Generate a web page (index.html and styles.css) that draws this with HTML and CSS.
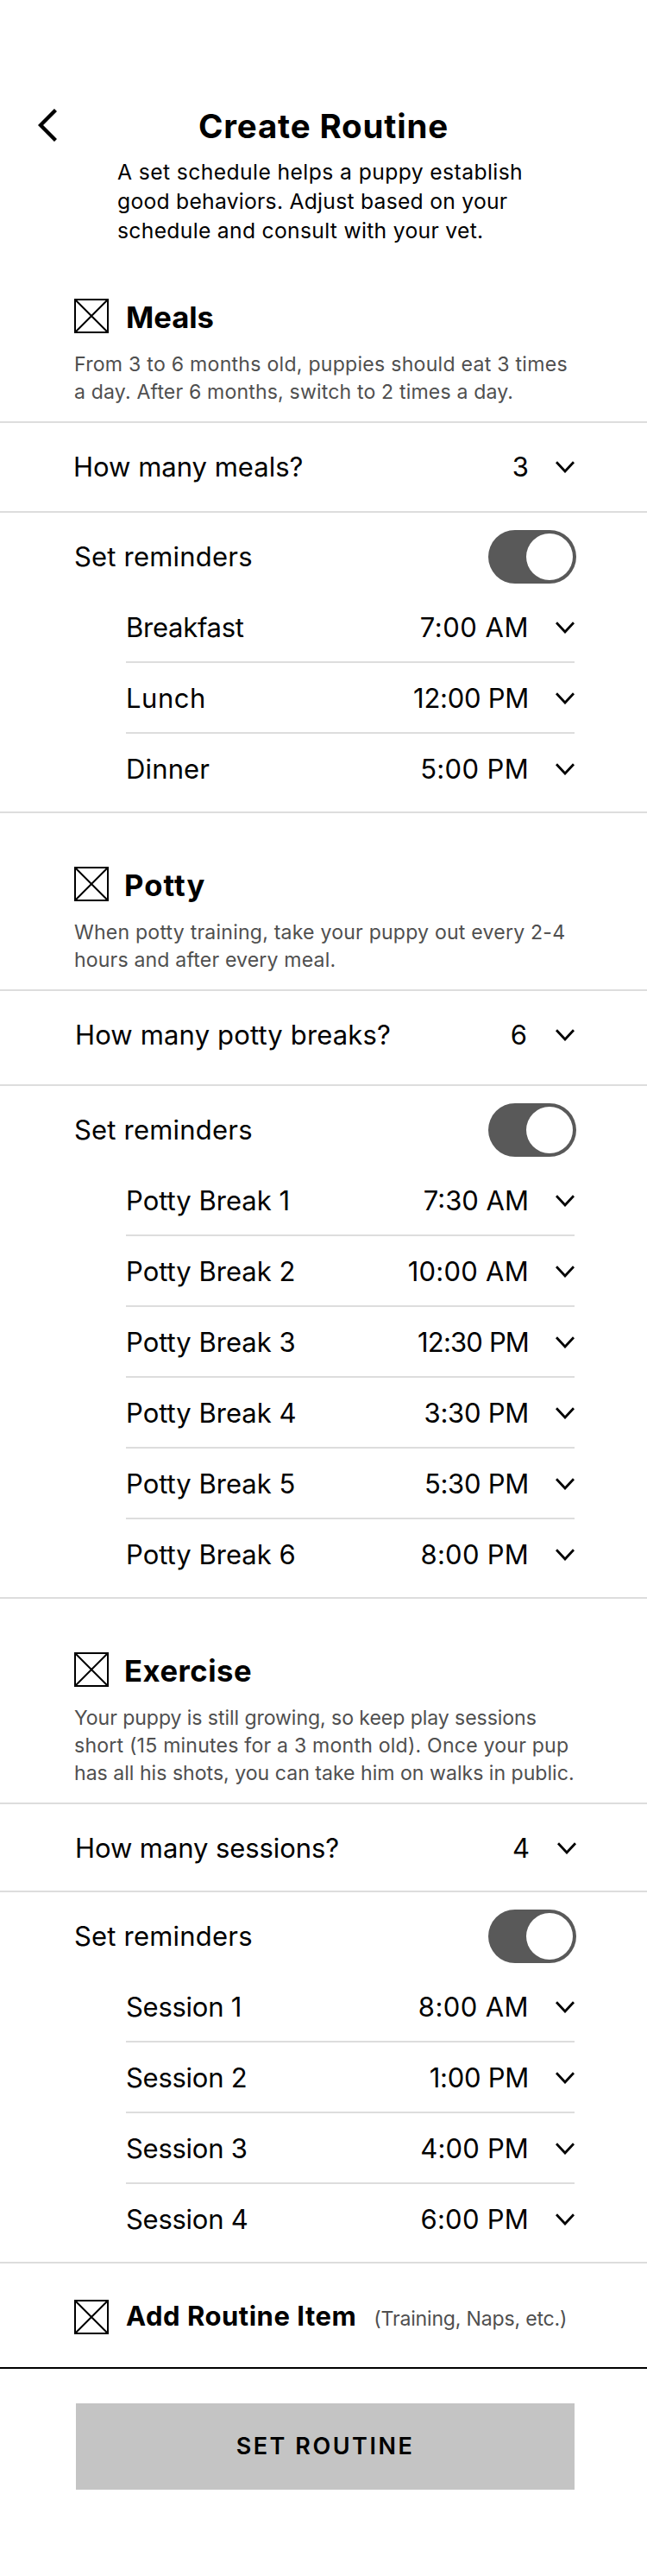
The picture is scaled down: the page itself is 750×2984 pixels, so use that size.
FILE: index.html
```html
<!DOCTYPE html>
<html lang="en">
<head>
<meta charset="utf-8">
<title>Create Routine</title>
<link rel="stylesheet" href="styles.css">
</head>
<body>
<svg class="defs" aria-hidden="true">
  <symbol id="box" viewBox="0 0 40 40"><path d="M1 1H39V39H1ZM1 1L39 39M39 1L1 39" fill="none" stroke="#000" stroke-width="2"/></symbol>
  <symbol id="down" viewBox="0 0 22 14"><path d="M1 1.2L11 12L21 1.2" fill="none" stroke="#000" stroke-width="2.8"/></symbol>
</svg>
<main class="page">
  <header class="header">
    <svg class="back" viewBox="0 0 22 38"><path d="M20.5 1.5L3 19L20.5 36.5" fill="none" stroke="#000" stroke-width="4.4"/></svg>
    <h1 class="title">Create Routine</h1>
    <p class="intro"><span class="line t40">A set schedule helps a puppy establish</span><span class="line t25">good behaviors. Adjust based on your</span><span class="line t30">schedule and consult with your vet.</span></p>
  </header>

  <section class="section">
    <div class="heading-row"><svg class="box"><use href="#box"/></svg><h2 class="heading">Meals</h2></div>
    <p class="desc"><span class="line t25">From 3 to 6 months old, puppies should eat 3 times</span><span class="line t15">a day. After 6 months, switch to 2 times a day.</span></p>
    <div class="count"><span class="label">How many meals?</span><span class="value">3</span><svg class="down"><use href="#down"/></svg></div>
    <div class="reminders"><span class="label t20">Set reminders</span><span class="toggle"><span class="knob"></span></span></div>
    <ul class="times">
      <li class="time"><span class="label tn25">Breakfast</span><span class="value t50">7:00 AM</span><svg class="down"><use href="#down"/></svg></li>
      <li class="time"><span class="label t50">Lunch</span><span class="value tn25">12:00 PM</span><svg class="down"><use href="#down"/></svg></li>
      <li class="time"><span class="label t15">Dinner</span><span class="value t35">5:00 PM</span><svg class="down"><use href="#down"/></svg></li>
    </ul>
  </section>

  <section class="section section-potty">
    <div class="heading-row"><svg class="box"><use href="#box"/></svg><h2 class="heading t100">Potty</h2></div>
    <p class="desc"><span class="line t20">When potty training, take your puppy out every 2-4</span><span class="line t15">hours and after every meal.</span></p>
    <div class="count"><span class="label t15">How many potty breaks?</span><span class="value">6</span><svg class="down"><use href="#down"/></svg></div>
    <div class="reminders"><span class="label t20">Set reminders</span><span class="toggle"><span class="knob"></span></span></div>
    <ul class="times">
      <li class="time"><span class="label">Potty Break 1</span><span class="value">7:30 AM</span><svg class="down"><use href="#down"/></svg></li>
      <li class="time"><span class="label">Potty Break 2</span><span class="value t25">10:00 AM</span><svg class="down"><use href="#down"/></svg></li>
      <li class="time"><span class="label">Potty Break 3</span><span class="value tn80">12:30 PM</span><svg class="down"><use href="#down"/></svg></li>
      <li class="time"><span class="label">Potty Break 4</span><span class="value tn25">3:30 PM</span><svg class="down"><use href="#down"/></svg></li>
      <li class="time"><span class="label">Potty Break 5</span><span class="value tn25">5:30 PM</span><svg class="down"><use href="#down"/></svg></li>
      <li class="time"><span class="label">Potty Break 6</span><span class="value t25">8:00 PM</span><svg class="down"><use href="#down"/></svg></li>
    </ul>
  </section>

  <section class="section section-exercise">
    <div class="heading-row"><svg class="box"><use href="#box"/></svg><h2 class="heading t50">Exercise</h2></div>
    <p class="desc"><span class="line tn10">Your puppy is still growing, so keep play sessions</span><span class="line t20">short (15 minutes for a 3 month old). Once your pup</span><span class="line">has all his shots, you can take him on walks in public.</span></p>
    <div class="count"><span class="label tn10">How many sessions?</span><span class="value">4</span><svg class="down"><use href="#down"/></svg></div>
    <div class="reminders"><span class="label t20">Set reminders</span><span class="toggle"><span class="knob"></span></span></div>
    <ul class="times">
      <li class="time"><span class="label tn25">Session 1</span><span class="value t40">8:00 AM</span><svg class="down"><use href="#down"/></svg></li>
      <li class="time"><span class="label tn25">Session 2</span><span class="value tn25">1:00 PM</span><svg class="down"><use href="#down"/></svg></li>
      <li class="time"><span class="label tn25">Session 3</span><span class="value t15">4:00 PM</span><svg class="down"><use href="#down"/></svg></li>
      <li class="time"><span class="label tn25">Session 4</span><span class="value t25">6:00 PM</span><svg class="down"><use href="#down"/></svg></li>
    </ul>
  </section>

  <div class="add"><svg class="box"><use href="#box"/></svg><p class="add-text"><strong class="add-title">Add Routine Item</strong><span class="add-note">(Training, Naps, etc.)</span></p></div>
  <footer class="footer"><button class="submit">SET ROUTINE</button></footer>
</main>
</body>
</html>
```
FILE: styles.css
```css
* { box-sizing: border-box; margin: 0; padding: 0; }
body { background: #fff; color: #000; font-family: Inter, "Open Sans", sans-serif; font-size: 31px; line-height: 40px; }
.defs { display: none; }
.page { width: 750px; height: 2984px; overflow: hidden; }
.line { display: block; white-space: nowrap; }

.header { display: grid; grid-template-columns: 136px 1fr 136px; row-gap: 12px; padding-top: 122px; }
.back { width: 22px; height: 38px; margin: 4px 0 0 44px; }
.title { font-size: 38.5px; line-height: 48px; letter-spacing: 0.84px; text-align: center; white-space: nowrap; }
.intro { grid-column: 2; font-size: 24.7px; line-height: 34px; }

.section { padding-top: 62px; }
.heading-row { display: flex; align-items: center; gap: 20px; height: 40px; padding-left: 86px; }
.box { flex: none; width: 40px; height: 40px; }
.heading { padding-top: 1px; font-size: 34.6px; line-height: 40px; }
.section-potty .heading-row, .section-exercise .heading-row { gap: 18px; }
.desc { margin-top: 20px; padding: 0 0 18px 86px; color: #4f4f4f; font-size: 23.1px; line-height: 32px; border-bottom: 2px solid #ddd; }

.label { flex: 1; white-space: nowrap; }
.value { white-space: nowrap; }
.down { flex: none; width: 22px; height: 14px; margin-left: 31px; }
.count { display: flex; align-items: center; height: 104px; padding: 0 84px 0 85px; border-bottom: 2px solid #ddd; }
.section-potty .count { height: 110px; padding-left: 87px; padding-bottom: 6px; }
.section-potty .count .down { margin-left: 33px; }
.section-exercise .count { height: 102px; padding: 1px 82px 0 87px; }
.section-exercise .count .down { margin-left: 32px; }

.reminders { display: flex; align-items: center; height: 82px; padding: 20px 82px 0 86px; }
.toggle { display: flex; justify-content: flex-end; width: 102px; height: 62px; padding: 4px; border-radius: 31px; background: #595959; }
.knob { width: 54px; height: 54px; border-radius: 50%; background: #fff; }

.times { padding: 10px 84px 0 146px; list-style: none; border-bottom: 2px solid #ddd; }
.time { display: flex; align-items: center; height: 82px; padding-top: 2px; border-bottom: 2px solid #ddd; }
.time:last-child { height: 90px; padding-bottom: 10px; border-bottom: 0; }

.add { display: flex; gap: 20px; height: 122px; padding: 42px 0 0 86px; border-bottom: 2px solid #000; }
.add-text { display: flex; align-items: baseline; gap: 20px; margin-top: -1px; white-space: nowrap; }
.add-title { letter-spacing: 0.52px; }
.add-note { color: #4f4f4f; font-size: 23.1px; letter-spacing: -0.2px; }

.footer { padding: 40px 84px 0 88px; }
.submit { display: block; width: 100%; height: 100px; border: 0; background: #c4c4c4; color: #000; font: 600 27px/40px Inter, sans-serif; letter-spacing: 2.53px; }

/* Tracking steps, in hundredths of a pixel (n = negative) */
.t15 { letter-spacing: 0.15px; }
.t20 { letter-spacing: 0.2px; }
.t25 { letter-spacing: 0.25px; }
.t30 { letter-spacing: 0.3px; }
.t35 { letter-spacing: 0.35px; }
.t40 { letter-spacing: 0.4px; }
.t50 { letter-spacing: 0.52px; }
.t100 { letter-spacing: 1.05px; }
.tn10 { letter-spacing: -0.08px; }
.tn25 { letter-spacing: -0.27px; }
.tn80 { letter-spacing: -0.84px; }
```
